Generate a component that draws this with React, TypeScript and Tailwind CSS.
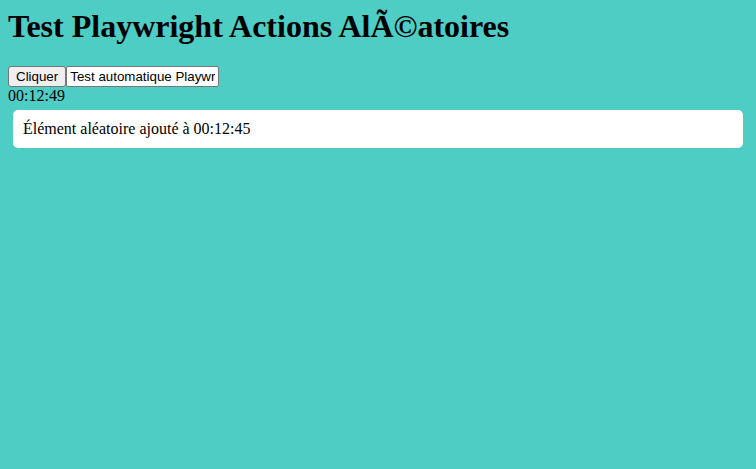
import React from "react";

export default function App() {
  return (
    <div className="min-h-[469px] bg-[#4ecdc4] p-2 text-black font-['Liberation_Serif',serif]">
      <h1 className="text-[32px] font-bold leading-[37px] mb-[21px]">
        Test Playwright Actions AlÃ©atoires
      </h1>
      <div className="flex items-end">
        <button className="h-[21px] px-[7px] bg-[#efefef] border border-[#767676] rounded-[3px] text-[13.33px] leading-none text-black font-['Liberation_Sans',sans-serif]">
          Cliquer
        </button>
        <input
          type="text"
          readOnly
          value="Test automatique Playwright"
          className="h-[21px] w-[153px] px-[3px] bg-white border border-[#767676] rounded-[2px] text-[13.33px] text-black font-['Liberation_Sans',sans-serif] outline-none"
        />
      </div>
      <div className="text-[16px] leading-[18px]">00:12:49</div>
      <div className="m-[5px] p-[10px] bg-white rounded-[5px] text-[16px] leading-[18px]">
        Élément aléatoire ajouté à 00:12:45
      </div>
    </div>
  );
}
